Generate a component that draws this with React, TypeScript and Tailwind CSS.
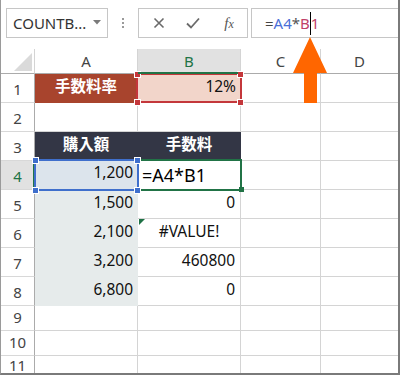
import React from "react";

const FONT = "font-['Noto_Sans','Noto_Sans_CJK_JP',sans-serif]";

function Handle({ x, y, color }: { x: number; y: number; color: string }) {
  return (
    <div
      className="absolute w-[7px] h-[7px] border border-white box-border"
      style={{ left: x - 1 - 3, top: y - 3, backgroundColor: color }}
    />
  );
}

function RowHead({ n, h, active, small }: { n: number; h: string; active?: boolean; small?: boolean }) {
  return (
    <div
      className={`${h} w-[34px] shrink-0 flex items-center justify-center border-r border-b border-r-[#ababab] border-b-[#d8d8d8] text-[15px] ${
        active ? "bg-[#e1e1e1] text-[#217346]" : "bg-white text-[#444]"
      }`}
    >
      <span className={small ? "pb-[2px]" : "pt-[3px]"}>{n}</span>
    </div>
  );
}

function Cell({
  w,
  children,
  cls = "",
  border = "border-[#d4d4d4]",
}: {
  w: string;
  children?: React.ReactNode;
  cls?: string;
  border?: string;
}) {
  return (
    <div className={`${w} shrink-0 h-full flex items-center border-r border-b ${border} text-[15.5px] text-[#111] ${cls}`}>
      {children}
    </div>
  );
}

type Row = {
  n: number;
  h: string;
  a?: React.ReactNode;
  aCls?: string;
  aBorder?: string;
  b?: React.ReactNode;
  bCls?: string;
  bBorder?: string;
  active?: boolean;
  small?: boolean;
};

export default function App() {
  const rows: Row[] = [
    {
      n: 1,
      h: "h-[29px]",
      a: <span className="w-full text-center font-bold text-white pb-[2px]">手数料率</span>,
      aCls: "bg-[#a8442d]",
      aBorder: "border-[#a8442d]",
      b: <span className="w-full text-right pr-[4px] pb-[2px]">12%</span>,
      bCls: "bg-[#f2d5ca]",
      bBorder: "border-[#f2d5ca]",
    },
    { n: 2, h: "h-[29px]" },
    {
      n: 3,
      h: "h-[29px]",
      a: <span className="w-full text-center font-bold text-white pb-[2px]">購入額</span>,
      aCls: "bg-[#333645]",
      aBorder: "border-[#333645]",
      b: <span className="w-full text-center font-bold text-white pb-[2px]">手数料</span>,
      bCls: "bg-[#333645]",
      bBorder: "border-[#333645]",
    },
    {
      n: 4,
      h: "h-[29px]",
      active: true,
      a: <span className="w-full text-right pr-[4px] pb-[5px]">1,200</span>,
      aCls: "bg-[#dce4ec]",
      aBorder: "border-[#dce4ec]",
      b: <span className="w-full text-left pl-[4px] text-[18px] text-black">=A4*B1</span>,
    },
    {
      n: 5,
      h: "h-[29px]",
      a: <span className="w-full text-right pr-[4px] pb-[3px]">1,500</span>,
      aCls: "bg-[#e6ebeb]",
      aBorder: "border-[#e6ebeb]",
      b: <span className="w-full text-right pr-[5px] pb-[3px]">0</span>,
    },
    {
      n: 6,
      h: "h-[29px]",
      a: <span className="w-full text-right pr-[4px] pb-[3px]">2,100</span>,
      aCls: "bg-[#e6ebeb]",
      aBorder: "border-[#e6ebeb]",
      b: <span className="w-full text-center pb-[3px]">#VALUE!</span>,
    },
    {
      n: 7,
      h: "h-[29px]",
      a: <span className="w-full text-right pr-[4px] pb-[3px]">3,200</span>,
      aCls: "bg-[#e6ebeb]",
      aBorder: "border-[#e6ebeb]",
      b: <span className="w-full text-right pr-[5px] pb-[3px]">460800</span>,
    },
    {
      n: 8,
      h: "h-[29px]",
      a: <span className="w-full text-right pr-[4px] pb-[3px]">6,800</span>,
      aCls: "bg-[#e6ebeb]",
      aBorder: "border-[#e6ebeb]",
      b: <span className="w-full text-right pr-[5px] pb-[3px]">0</span>,
    },
    { n: 9, h: "h-[25px]", small: true },
    { n: 10, h: "h-[25px]", small: true },
    { n: 11, h: "h-[22px]", small: true },
  ];

  return (
    <div
      className={`relative w-[400px] h-[375px] overflow-hidden bg-white border-l border-r-2 border-b-2 border-l-[#9a9a9a] border-r-[#7a7a7a] border-b-[#7a7a7a] ${FONT}`}
    >
      {/* Formula bar */}
      <div className="h-[49px] flex items-start pt-[8px] bg-white">
        <div className="ml-[5px] w-[102px] h-[30px] border border-[#c6c6c6] bg-white flex items-center pl-[6px] pr-[6px] text-[15px] text-[#333]">
          <span className="flex-1">COUNTB...</span>
          <svg width="8" height="5" viewBox="0 0 8 5" className="mb-[2px]">
            <polygon points="0,0 8,0 4,4.5" fill="#7a7a7a" />
          </svg>
        </div>
        <div className="w-[30px] h-[30px] flex flex-col items-center justify-center gap-[2px]">
          <div className="w-[2px] h-[2px] bg-[#9a9a9a]" />
          <div className="w-[2px] h-[2px] bg-[#9a9a9a]" />
          <div className="w-[2px] h-[2px] bg-[#9a9a9a]" />
        </div>
        <div className="w-[110px] h-[30px] border border-[#c6c6c6] flex items-center">
          <div className="w-[36px] flex justify-center pl-[3px]">
            <svg width="12" height="12" viewBox="0 0 12 12">
              <path d="M1.5 1.5 L10.5 10.5 M10.5 1.5 L1.5 10.5" stroke="#6a6a6a" strokeWidth="1.6" />
            </svg>
          </div>
          <div className="w-[36px] flex justify-center">
            <svg width="14" height="12" viewBox="0 0 14 12">
              <path d="M1 6.5 L5 10.5 L13 1.5" stroke="#6a6a6a" strokeWidth="1.8" fill="none" />
            </svg>
          </div>
          <div className="w-[36px] flex justify-center">
            <span className="font-['Liberation_Serif',serif] italic text-[15px] text-[#555] leading-none">
              f<span className="text-[12px]">x</span>
            </span>
          </div>
        </div>
        <div className="ml-[3px] flex-1 h-[30px] border-t border-l border-b border-[#c6c6c6] flex items-center pl-[13px] text-[15px]">
          <span className="text-[#444]">=</span>
          <span className="text-[#4a6fd8]">A4</span>
          <span className="text-[#555]">*</span>
          <span className="text-[#c04068]">B</span>
          <span className="inline-block w-[1px] h-[23px] bg-black" />
          <span className="text-[#c04068]">1</span>
        </div>
      </div>

      {/* Column headers */}
      <div className="flex h-[25px]">
        <div className="relative w-[34px] shrink-0 border-r border-b border-r-[#d4d4d4] border-b-[#ababab]">
          <svg width="18" height="18" viewBox="0 0 18 18" className="absolute right-[2px] bottom-[2px]">
            <polygon points="18,0 18,18 0,18" fill="#dadada" />
          </svg>
        </div>
        <div className="w-[103px] shrink-0 flex items-center justify-center border-r border-b border-r-[#d4d4d4] border-b-[#ababab] text-[15px] text-[#444]">
          A
        </div>
        <div className="relative w-[103px] shrink-0 flex items-center justify-center bg-[#e1e1e1] border-r border-r-[#d4d4d4] text-[15px] text-[#217346]">
          B
          <div className="absolute left-0 right-[-1px] bottom-0 h-[2px] bg-[#217346]" />
        </div>
        <div className="w-[80px] shrink-0 flex items-center justify-center border-r border-b border-r-[#d4d4d4] border-b-[#ababab] text-[15px] text-[#444]">
          C
        </div>
        <div className="flex-1 flex items-center justify-center border-b border-b-[#ababab] text-[15px] text-[#444]">
          D
        </div>
      </div>

      {/* Rows */}
      {rows.map((r) => (
        <div key={r.n} className={`flex ${r.h}`}>
          <RowHead n={r.n} h={r.h} active={r.active} small={r.small} />
          <Cell w="w-[103px]" cls={r.aCls} border={r.aBorder}>
            {r.a}
          </Cell>
          <Cell w="w-[103px]" cls={r.bCls} border={r.bBorder}>
            {r.b}
          </Cell>
          <Cell w="w-[80px]" />
          <div className="flex-1 h-full border-b border-[#d4d4d4]" />
        </div>
      ))}

      {/* Row 4 header green edge */}
      <div className="absolute left-[32px] top-[160px] w-[2px] h-[29px] bg-[#217346]" />

      {/* B1 reference (red) */}
      <div className="absolute left-[135px] top-[73px] w-[106px] h-[30px] border-2 border-[#c4373b]" />
      <Handle x={137} y={74} color="#c4373b" />
      <Handle x={240} y={74} color="#c4373b" />
      <Handle x={137} y={102} color="#c4373b" />
      <Handle x={240} y={102} color="#c4373b" />
      <div className="absolute left-[137px] top-[72px] w-[100px] h-[2px] bg-[#217346]" />

      {/* B4 active cell (green) */}
      <div className="absolute left-[136px] top-[159px] w-[105px] h-[32px] border-2 border-[#217346]" />
      <div className="absolute left-[238px] top-[187px] w-[5px] h-[5px] bg-[#217346]" />

      {/* A4 reference (blue) */}
      <div className="absolute left-[33px] top-[159px] w-[105px] h-[32px] border-2 border-[#3f6fcc]" />
      <Handle x={35} y={160} color="#3f6fcc" />
      <Handle x={137} y={160} color="#3f6fcc" />
      <Handle x={35} y={190} color="#3f6fcc" />
      <Handle x={137} y={190} color="#3f6fcc" />

      {/* Error triangle B6 */}
      <svg width="6" height="6" viewBox="0 0 6 6" className="absolute left-[138px] top-[219px]">
        <polygon points="0,0 6,0 0,6" fill="#1e7145" />
      </svg>

      {/* Orange arrow */}
      <svg width="36" height="67" viewBox="0 0 36 67" className="absolute left-[291px] top-[37px]">
        <polygon points="18,0 35,36 25,36 25,66 12,66 12,36 1,36" fill="#ff6600" />
      </svg>
    </div>
  );
}
